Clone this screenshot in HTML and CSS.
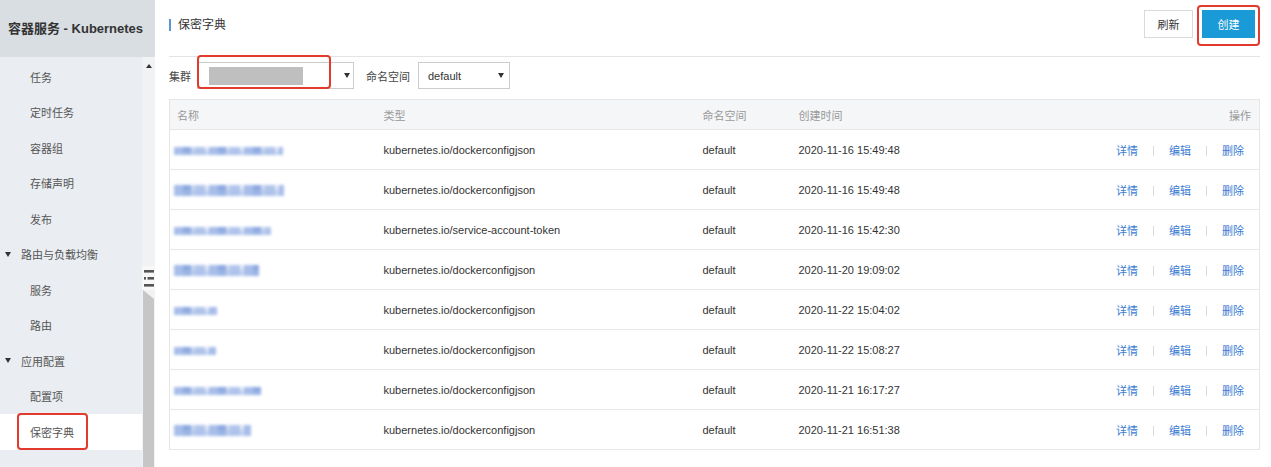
FILE: index.html
```html
<!DOCTYPE html>
<html lang="zh-CN">
<head>
<meta charset="utf-8">
<title>保密字典</title>
<link rel="stylesheet" href="styles.css">
</head>
<body>
<div class="app">
  <aside class="sidebar">
    <div class="side-head">容器服务 - Kubernetes</div>
    <div class="side-body">
      <ul class="nav">
        <li class="nav-item">任务</li>
        <li class="nav-item">定时任务</li>
        <li class="nav-item">容器组</li>
        <li class="nav-item">存储声明</li>
        <li class="nav-item">发布</li>
        <li class="nav-group"><span class="caret"></span>路由与负载均衡</li>
        <li class="nav-item">服务</li>
        <li class="nav-item">路由</li>
        <li class="nav-group"><span class="caret"></span>应用配置</li>
        <li class="nav-item">配置项</li>
        <li class="nav-item active"><span class="hl">保密字典</span></li>
      </ul>
      <div class="track">
        <span class="arrow-up"></span>
        <div class="track-spacer"></div>
        <div class="handle">
          <svg width="10" height="17" viewBox="0 0 10 17">
            <rect x="0" y="0" width="10" height="2.6" fill="#555"/>
            <rect x="0" y="7" width="2" height="2.6" fill="#555"/>
            <rect x="3.5" y="7" width="6.5" height="2.6" fill="#555"/>
            <rect x="0" y="14" width="10" height="2.6" fill="#555"/>
          </svg>
        </div>
        <div class="thumb"></div>
      </div>
    </div>
  </aside>

  <main class="main">
    <header class="page-head">
      <h1 class="page-title">保密字典</h1>
      <div class="head-actions">
        <button class="btn">刷新</button>
        <span class="btn-wrap"><button class="btn btn-primary">创建</button></span>
      </div>
    </header>

    <div class="filters">
      <span class="label">集群</span>
      <div class="select select-cluster">
        <span class="redacted"></span>
        <span class="arrow-down"></span>
        <span class="annot"></span>
      </div>
      <span class="label label-ns">命名空间</span>
      <div class="select select-ns">
        <span>default</span>
        <span class="arrow-down"></span>
      </div>
    </div>

    <table class="grid">
      <colgroup>
        <col class="c-name">
        <col class="c-type">
        <col class="c-ns">
        <col class="c-time">
        <col>
      </colgroup>
      <thead>
        <tr>
          <th>名称</th>
          <th>类型</th>
          <th>命名空间</th>
          <th>创建时间</th>
          <th class="th-ops">操作</th>
        </tr>
      </thead>
      <tbody>
        <tr>
          <td><span class="blur" style="width:109px"></span></td>
          <td>kubernetes.io/dockerconfigjson</td>
          <td>default</td>
          <td>2020-11-16 15:49:48</td>
          <td class="ops"><a>详情</a><i class="sep"></i><a>编辑</a><i class="sep"></i><a>删除</a></td>
        </tr>
        <tr>
          <td><span class="blur blur-tall" style="width:110px"></span></td>
          <td>kubernetes.io/dockerconfigjson</td>
          <td>default</td>
          <td>2020-11-16 15:49:48</td>
          <td class="ops"><a>详情</a><i class="sep"></i><a>编辑</a><i class="sep"></i><a>删除</a></td>
        </tr>
        <tr>
          <td><span class="blur" style="width:97px"></span></td>
          <td>kubernetes.io/service-account-token</td>
          <td>default</td>
          <td>2020-11-16 15:42:30</td>
          <td class="ops"><a>详情</a><i class="sep"></i><a>编辑</a><i class="sep"></i><a>删除</a></td>
        </tr>
        <tr>
          <td><span class="blur blur-tall" style="width:85px"></span></td>
          <td>kubernetes.io/dockerconfigjson</td>
          <td>default</td>
          <td>2020-11-20 19:09:02</td>
          <td class="ops"><a>详情</a><i class="sep"></i><a>编辑</a><i class="sep"></i><a>删除</a></td>
        </tr>
        <tr>
          <td><span class="blur" style="width:43px"></span></td>
          <td>kubernetes.io/dockerconfigjson</td>
          <td>default</td>
          <td>2020-11-22 15:04:02</td>
          <td class="ops"><a>详情</a><i class="sep"></i><a>编辑</a><i class="sep"></i><a>删除</a></td>
        </tr>
        <tr>
          <td><span class="blur" style="width:42px"></span></td>
          <td>kubernetes.io/dockerconfigjson</td>
          <td>default</td>
          <td>2020-11-22 15:08:27</td>
          <td class="ops"><a>详情</a><i class="sep"></i><a>编辑</a><i class="sep"></i><a>删除</a></td>
        </tr>
        <tr>
          <td><span class="blur" style="width:87px"></span></td>
          <td>kubernetes.io/dockerconfigjson</td>
          <td>default</td>
          <td>2020-11-21 16:17:27</td>
          <td class="ops"><a>详情</a><i class="sep"></i><a>编辑</a><i class="sep"></i><a>删除</a></td>
        </tr>
        <tr>
          <td><span class="blur blur-tall" style="width:77px"></span></td>
          <td>kubernetes.io/dockerconfigjson</td>
          <td>default</td>
          <td>2020-11-21 16:51:38</td>
          <td class="ops"><a>详情</a><i class="sep"></i><a>编辑</a><i class="sep"></i><a>删除</a></td>
        </tr>
      </tbody>
    </table>
  </main>
</div>
</body>
</html>
```

FILE: styles.css
```css
html, body {
  margin: 0;
  height: 100%;
  overflow: hidden;
}

body {
  font-family: "Liberation Sans", "Noto Sans CJK SC", sans-serif;
  font-size: 11px;
  color: #333;
  background: #fff;
}

.app {
  display: flex;
  height: 467px;
}

/* ---------- sidebar ---------- */
.sidebar {
  width: 155px;
  flex: none;
  display: flex;
  flex-direction: column;
}

.side-head {
  height: 57px;
  flex: none;
  box-sizing: border-box;
  background: #d9dee3;
  display: flex;
  align-items: center;
  padding: 0 0 2px 8px;
  font-size: 13px;
  font-weight: bold;
  color: #333;
  white-space: nowrap;
}

.side-body {
  flex: 1;
  display: flex;
  min-height: 0;
}

.nav {
  width: 142px;
  flex: none;
  margin: 0;
  padding: 2px 0 0;
  list-style: none;
  background: #eaedf1;
}

.nav li {
  height: 35.5px;
  display: flex;
  align-items: center;
  color: #555;
}

.nav-item {
  padding-left: 30px;
}

.nav-group {
  padding-left: 5px;
  color: #333;
}

.caret {
  width: 0;
  height: 0;
  border-left: 3.5px solid transparent;
  border-right: 3.5px solid transparent;
  border-top: 5px solid #333;
  margin-right: 10px;
}

.nav li.active {
  background: #fff;
  padding-left: 17px;
}

.hl {
  display: flex;
  align-items: center;
  height: 37px;
  box-sizing: border-box;
  border: 2px solid #e23b2e;
  border-radius: 4px;
  padding: 0 12px 0 11px;
}

.track {
  width: 13px;
  flex: none;
  background: #f1f2f4;
  display: flex;
  flex-direction: column;
  align-items: center;
}

.arrow-up {
  margin-top: 7px;
  width: 0;
  height: 0;
  border-left: 3px solid transparent;
  border-right: 3px solid transparent;
  border-bottom: 4px solid #333;
}

.track-spacer {
  flex: 1;
}

.handle {
  width: 13px;
  height: 24px;
  background: #f8f8f9;
  display: flex;
  align-items: center;
  justify-content: center;
}

.thumb {
  width: 11px;
  height: 177px;
  flex: none;
  align-self: flex-start;
  margin-left: 1px;
  background: #c6c6c6;
  clip-path: polygon(0 0, 100% 9px, 100% 100%, 0 100%);
}

/* ---------- main ---------- */
.main {
  flex: 1;
  min-width: 0;
  padding: 0 11px 0 14px;
}

.page-head {
  height: 57px;
  box-sizing: border-box;
  border-bottom: 1px solid #e4e4e4;
  display: flex;
  align-items: flex-start;
  justify-content: space-between;
}

.page-title {
  margin: 19px 0 0;
  font-size: 12px;
  font-weight: normal;
  line-height: 12px;
  border-left: 2px solid #5b95d6;
  padding-left: 7px;
  color: #333;
}

.head-actions {
  display: flex;
  align-items: flex-start;
  gap: 4px;
  margin-top: 5px;
}

.btn {
  font: inherit;
  font-size: 11px;
  width: 49px;
  height: 28px;
  margin-top: 5px;
  padding: 0;
  border: 1px solid #dadada;
  background: #fff;
  color: #333;
}

.btn-wrap {
  display: block;
  border: 2px solid #e23b2e;
  border-radius: 4px;
  padding: 3px 3px 6px;
}

.btn.btn-primary {
  display: block;
  width: 53px;
  margin-top: 0;
  background: #1a9ad6;
  border-color: #1a9ad6;
  color: #fff;
}

/* ---------- filters ---------- */
.filters {
  display: flex;
  align-items: center;
  height: 27px;
  margin-top: 5px;
}

.label {
  margin-right: 6px;
  color: #444;
}

.label-ns {
  margin-left: 12px;
  margin-right: 8px;
}

.select {
  position: relative;
  height: 27px;
  box-sizing: border-box;
  border: 1px solid #ccc;
  background: #fff;
  display: flex;
  align-items: center;
  justify-content: space-between;
}

.select-cluster {
  width: 157px;
  padding: 0 3px 0 11px;
}

.select-ns {
  width: 92px;
  padding: 0 5px 0 9px;
}

.redacted {
  width: 94px;
  height: 18px;
  background: #bfbfbf;
}

.arrow-down {
  width: 0;
  height: 0;
  border-left: 3.5px solid transparent;
  border-right: 3.5px solid transparent;
  border-top: 5px solid #333;
}

.annot {
  position: absolute;
  left: -1px;
  top: -8px;
  width: 134px;
  height: 34px;
  box-sizing: border-box;
  border: 2px solid #e23b2e;
  border-radius: 4px;
}

/* ---------- table ---------- */
.grid {
  width: 100%;
  margin-top: 10px;
  border-collapse: collapse;
  table-layout: fixed;
  border: 1px solid #e6e6e6;
}

.c-name { width: 207px; }
.c-type { width: 319px; }
.c-ns { width: 96px; }
.c-time { width: 180px; }

.grid th {
  height: 29px;
  padding: 0 7px;
  background: #f4f6f8;
  color: #999;
  font-weight: normal;
  text-align: left;
  border-bottom: 1px solid #e6e6e6;
}

.grid th.th-ops {
  text-align: right;
  padding-right: 8px;
}

.grid td {
  height: 39px;
  padding: 0 7px;
  border-bottom: 1px solid #e8e8e8;
  white-space: nowrap;
  color: #333;
}

.blur {
  display: inline-block;
  vertical-align: middle;
  margin-left: -3px;
  height: 8px;
  background:
    linear-gradient(180deg, rgba(255,255,255,0) 0 45%, rgba(160,185,232,0.5) 45% 100%),
    repeating-linear-gradient(90deg, #9db5e6 0 9px, #7f9fdc 9px 17px, #c4d2ef 17px 21px, #a9bfe9 21px 31px, #dbe3f4 31px 35px);
  filter: blur(1.6px);
  opacity: 0.9;
}

.blur-tall {
  height: 11px;
}

.grid td.ops {
  text-align: right;
  padding-right: 15px;
}

.ops a {
  color: #3a7bd3;
  cursor: pointer;
}

.sep {
  display: inline-block;
  width: 1px;
  height: 10px;
  margin: 0 15px;
  vertical-align: -1px;
  background: #dcdcdc;
}
```
